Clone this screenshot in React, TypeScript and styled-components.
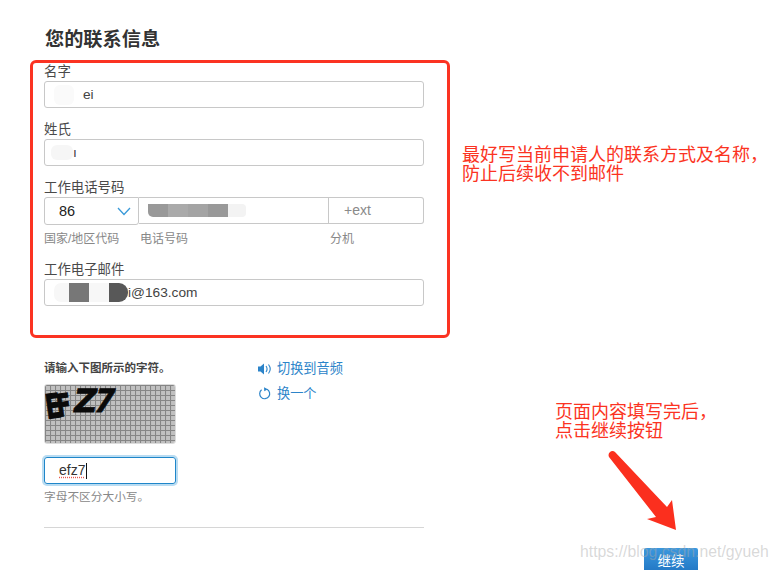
import React from "react";
import styled, { createGlobalStyle } from "styled-components";

const Global = createGlobalStyle`
  html, body { margin: 0; padding: 0; background: #fff; height: 570px; overflow: hidden; }
  #root { height: 570px; }
  * { box-sizing: border-box; }
`;

const Page = styled.div`
  position: relative;
  width: 777px;
  height: 570px;
  overflow: hidden;
  padding: 28px 0 0 44px;
  font-family: "Liberation Sans", "Noto Sans CJK SC", sans-serif;
  color: #333;
`;

const Title = styled.h1`
  margin: 0 0 13px 1px;
  font-size: 19.2px;
  line-height: 24px;
  font-weight: 700;
  color: #333;
`;

const Column = styled.div`
  width: 380px;
  display: flex;
  flex-direction: column;
`;

const Field = styled.div<{ $gap?: number }>`
  margin-bottom: ${(p) => p.$gap ?? 0}px;
`;

const Label = styled.div`
  font-size: 13.4px;
  line-height: 14px;
  height: 14px;
  color: #4a4a4a;
  margin-bottom: 2px;
`;

const Input = styled.div<{ $pad: number; $gap?: number }>`
  display: flex;
  align-items: center;
  gap: ${(p) => p.$gap ?? 0}px;
  height: 27px;
  padding-left: ${(p) => p.$pad}px;
  border: 1px solid #c8c8c8;
  border-radius: 3px;
  background: #fff;
  font-size: 13.7px;
  line-height: 25px;
  color: #444;
  overflow: hidden;
`;

const Block = styled.i<{ $width: number; $height: number; $color: string; $round?: string }>`
  display: block;
  flex: none;
  width: ${(p) => p.$width}px;
  height: ${(p) => p.$height}px;
  background: ${(p) => p.$color};
  border-radius: ${(p) => p.$round ?? "0"};
`;

const PhoneRow = styled.div`
  display: flex;
  height: 27px;
`;

const Select = styled.div`
  width: 95px;
  height: 28px;
  border: 1px solid #c8c8c8;
  border-radius: 3px 0 3px 3px;
  display: flex;
  align-items: center;
  justify-content: space-between;
  padding: 0 7px 0 14px;
  font-size: 14.5px;
  color: #222;
`;

const PhoneInput = styled.div`
  display: flex;
  align-items: center;
  width: 190px;
  height: 27px;
  padding-left: 9px;
  border: 1px solid #c8c8c8;
  border-left: 0;
`;

const ExtInput = styled.div`
  flex: 1;
  height: 27px;
  border: 1px solid #c8c8c8;
  border-left: 0;
  border-radius: 0 3px 3px 0;
  padding-left: 15px;
  font-size: 14px;
  line-height: 25px;
  color: #8a8a8a;
`;

const SubLabels = styled.div`
  display: flex;
  margin-top: 8px;
  font-size: 12px;
  line-height: 14px;
  color: #888;
`;

const SubLabel = styled.div<{ $width: number }>`
  width: ${(p) => p.$width}px;
`;

const CaptchaRow = styled.div`
  display: flex;
  margin-top: 55px;
`;

const CaptchaCol = styled.div`
  width: 214px;
`;

const CaptchaTitle = styled.div`
  font-size: 11.5px;
  line-height: 14px;
  font-weight: 700;
  color: #444;
  margin-bottom: 9px;
`;

const CaptchaImage = styled.div`
  width: 132px;
  height: 60px;
  border: 1px solid #dcdcdc;
  border-radius: 3px;
  overflow: hidden;
`;

const CaptchaInput = styled.div`
  width: 132px;
  height: 27px;
  margin-top: 13px;
  border: 1px solid #1f86c9;
  border-radius: 3px;
  box-shadow: 0 0 0 2px #b9dcf2;
  padding-left: 14px;
  font-size: 14px;
  line-height: 25px;
  color: #333;
  display: flex;
  align-items: center;
`;

const Misspelt = styled.span`
  text-decoration: underline dotted #e8574f;
  text-underline-offset: 2px;
`;

const Caret = styled.i`
  display: block;
  width: 1px;
  height: 16px;
  background: #111;
  margin-left: 1px;
`;

const Hint = styled.div`
  margin-top: 6px;
  font-size: 11.7px;
  line-height: 14px;
  color: #888;
`;

const Links = styled.div`
  padding-top: 1px;
  display: flex;
  flex-direction: column;
  gap: 11px;
`;

const LinkItem = styled.a`
  display: flex;
  align-items: center;
  gap: 5px;
  font-size: 13.2px;
  line-height: 14px;
  color: #2c84c9;
`;

const Divider = styled.hr`
  width: 380px;
  margin: 23px 0 0;
  border: 0;
  border-top: 1px solid #d6d6d6;
`;

const Footer = styled.div`
  display: flex;
  justify-content: flex-end;
  width: 654px;
  margin-top: 20px;
`;

const Continue = styled.button`
  width: 54px;
  height: 30px;
  padding: 0 0 4px;
  border: 0;
  border-radius: 2px 2px 0 0;
  background: linear-gradient(#3b98de, #1c6fbe);
  color: #fff;
  font: 13.5px/17px "Liberation Sans", "Noto Sans CJK SC", sans-serif;
  text-align: center;
`;

const RedFrame = styled.div`
  position: absolute;
  left: 30px;
  top: 60px;
  width: 420px;
  height: 278px;
  border: 3px solid #fb3322;
  border-radius: 6px;
  pointer-events: none;
`;

const Note = styled.div<{ $left: number; $top: number }>`
  position: absolute;
  left: ${(p) => p.$left}px;
  top: ${(p) => p.$top}px;
  font-size: 18px;
  line-height: 19px;
  color: #fb3322;
  white-space: nowrap;
`;

const ArrowArt = styled.svg`
  position: absolute;
  left: 600px;
  top: 440px;
`;

const Watermark = styled.div`
  position: absolute;
  left: 580px;
  top: 542px;
  font-size: 15.8px;
  line-height: 19px;
  color: rgba(170, 170, 170, 0.45);
  white-space: nowrap;
`;

const Chevron = () => (
  <svg width="14" height="9" viewBox="0 0 14 9" fill="none">
    <path d="M1 1l6 6.5L13 1" stroke="#3a9ad9" strokeWidth="1.3" />
  </svg>
);

const Speaker = () => (
  <svg width="14" height="12" viewBox="0 0 14 12" fill="none">
    <path d="M0 3.5h2.5L6 .5v11l-3.500-3H0z" fill="#2c84c9" />
    <path d="M8 3c1.300 1.800 1.300 4.200 0 6M10.500 1.500c2 2.600 2 6.400 0 9" stroke="#2c84c9" strokeWidth="1.1" />
  </svg>
);

const Refresh = () => (
  <svg width="14" height="14" viewBox="0 0 14 14" fill="none">
    <path d="M3.600 2.800A5 5 0 1 0 9 2.300" stroke="#2c84c9" strokeWidth="1.200" />
    <path d="M6 .2l3.800 2.100L6.300 4.300z" fill="#2c84c9" />
  </svg>
);

const Captcha = () => (
  <svg width="130" height="58" viewBox="0 0 130 58">
    <defs>
      <pattern id="mesh" width="5" height="5" patternUnits="userSpaceOnUse">
        <rect width="5" height="5" fill="#c0c0c0" />
        <path d="M0 .5h5M.5 0v5" stroke="#858585" strokeWidth="1.100" />
      </pattern>
    </defs>
    <rect width="130" height="58" fill="url(#mesh)" />
    <g fontFamily="'DejaVu Sans', sans-serif" fontWeight="700" fill="#0a0a0a" stroke="#0a0a0a" strokeWidth=".8">
      <text transform="translate(2 34) rotate(-8) scale(.85 1.250)" fontSize="27">E</text>
      <text transform="translate(13 32) rotate(-8) scale(.85 1.250)" fontSize="25">F</text>
      <text transform="translate(27 27) skewX(-10)" fontSize="32">Z</text>
      <text transform="translate(47 27) skewX(-14) scale(.9 1)" fontSize="32">7</text>
    </g>
  </svg>
);

export default function App() {
  return (
    <Page>
      <Global />
      <Title>您的联系信息</Title>
      <Column>
        <Field $gap={15}>
          <Label>名字</Label>
          <Input $pad={9} $gap={9}>
            <Block $width={20} $height={20} $color="#fafafa" $round="6px" />
            ei
          </Input>
        </Field>
        <Field $gap={15}>
          <Label>姓氏</Label>
          <Input $pad={6} $gap={-1}>
            <Block $width={22} $height={15} $color="#f6f6f6" $round="6px" />ı
          </Input>
        </Field>
        <Field $gap={17}>
          <Label>工作电话号码</Label>
          <PhoneRow>
            <Select>
              86
              <Chevron />
            </Select>
            <PhoneInput>
              <Block $width={20} $height={13} $color="#999" $round="0 0 0 5px" />
              <Block $width={20} $height={13} $color="#aaa" />
              <Block $width={20} $height={13} $color="#a4a4a4" />
              <Block $width={20} $height={13} $color="#999" />
              <Block $width={18} $height={13} $color="#f3f3f3" $round="0 4px 4px 0" />
            </PhoneInput>
            <ExtInput>+ext</ExtInput>
          </PhoneRow>
          <SubLabels>
            <SubLabel $width={96}>国家/地区代码</SubLabel>
            <SubLabel $width={190}>电话号码</SubLabel>
            <SubLabel $width={60}>分机</SubLabel>
          </SubLabels>
        </Field>
        <Field>
          <Label>工作电子邮件</Label>
          <Input $pad={9}>
            <Block $width={15} $height={19} $color="#f7f7f7" $round="7px 0 0 7px" />
            <Block $width={20} $height={19} $color="#777" />
            <Block $width={20} $height={19} $color="#f7f7f7" />
            <Block $width={19} $height={19} $color="#585858" $round="0 9px 9px 0" />
            i@163.com
          </Input>
        </Field>
      </Column>
      <CaptchaRow>
        <CaptchaCol>
          <CaptchaTitle>请输入下图所示的字符。</CaptchaTitle>
          <CaptchaImage>
            <Captcha />
          </CaptchaImage>
          <CaptchaInput>
            <Misspelt>efz7</Misspelt>
            <Caret />
          </CaptchaInput>
          <Hint>字母不区分大小写。</Hint>
        </CaptchaCol>
        <Links>
          <LinkItem>
            <Speaker />
            切换到音频
          </LinkItem>
          <LinkItem>
            <Refresh />
            换一个
          </LinkItem>
        </Links>
      </CaptchaRow>
      <Divider />
      <Footer>
        <Continue>继续</Continue>
      </Footer>

      <RedFrame />
      <Note $left={462} $top={146}>
        最好写当前申请人的联系方式及名称，
        <br />
        防止后续收不到邮件
      </Note>
      <Note $left={555} $top={403}>
        页面内容填写完后，
        <br />
        点击继续按钮
      </Note>
      <ArrowArt width="90" height="100" viewBox="600 440 90 100">
        <path
          d="M615 452L667 507L672 500L676 530L647 519L656 517L609 457C607 453 612 449 615 452Z"
          fill="#fb2f1e"
        />
      </ArrowArt>
      <Watermark>https://blog.csdn.net/gyueh</Watermark>
    </Page>
  );
}
